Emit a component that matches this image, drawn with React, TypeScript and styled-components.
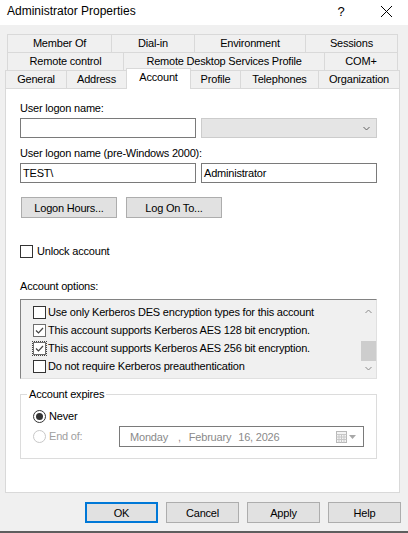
import React from 'react';
import styled, { createGlobalStyle } from 'styled-components';

const GlobalStyle = createGlobalStyle`
  html, body {
    margin: 0;
    padding: 0;
    background: #f0f0f0;
  }
  body {
    font-family: 'Liberation Sans', Arial, sans-serif;
    font-size: 11px;
    color: #000;
  }
  * {
    box-sizing: border-box;
  }
`;

const Window = styled.div`
  width: 408px;
  height: 533px;
  display: flex;
  flex-direction: column;
  background: #f0f0f0;
  border-bottom: 2px solid #5e5e5e;
  overflow: hidden;
  letter-spacing: -0.2px;
`;

const TitleBar = styled.div`
  height: 25px;
  flex-shrink: 0;
  display: flex;
  align-items: center;
  background: #fff;
  padding-left: 7px;
  letter-spacing: 0;
`;

const Title = styled.div`
  flex: 1;
  font-size: 12px;
  line-height: 14px;
  margin-top: -3px;
`;

const TitleButton = styled.div`
  width: 46px;
  height: 25px;
  display: flex;
  align-items: center;
  justify-content: center;
  font-size: 13px;
  margin-top: -3px;

  &:last-child {
    width: 44px;
  }
`;

const TabStrip = styled.div`
  margin-top: 9px;
  display: flex;
  flex-direction: column;
`;

const TabRow = styled.div<{ $left: number }>`
  display: flex;
  height: 18px;
  margin-left: ${(p) => p.$left}px;
`;

const Tab = styled.div<{ $w: number; $active?: boolean }>`
  width: ${(p) => p.$w}px;
  height: ${(p) => (p.$active ? 21 : 18)}px;
  margin-top: ${(p) => (p.$active ? -2 : 0)}px;
  margin-left: -1px;
  flex-shrink: 0;
  border: 1px solid #d9d9d9;
  border-bottom: none;
  background: ${(p) => (p.$active ? '#fff' : '#f0f0f0')};
  text-align: center;
  line-height: 17px;
  white-space: nowrap;
  position: relative;
  z-index: ${(p) => (p.$active ? 2 : 1)};

  &:first-child {
    margin-left: 0;
  }
`;

const Panel = styled.div`
  margin-left: 5px;
  width: 395px;
  height: 405px;
  flex-shrink: 0;
  background: #fff;
  border: 1px solid #d9d9d9;
  padding: 13px 0 0 14px;
  display: flex;
  flex-direction: column;
  align-items: flex-start;
`;

const Label = styled.div<{ $mt?: number }>`
  line-height: 13px;
  margin-top: ${(p) => p.$mt ?? 0}px;
`;

const FieldRow = styled.div`
  display: flex;
  gap: 5px;
  margin-top: 3px;
`;

const TextBox = styled.div`
  width: 176px;
  height: 20px;
  border: 1px solid #7a7a7a;
  background: #fff;
  padding-left: 2px;
  line-height: 18px;
`;

const ComboBox = styled.div`
  width: 176px;
  height: 20px;
  border: 1px solid #cccccc;
  background: #e5e5e5;
  display: flex;
  align-items: center;
  justify-content: flex-end;
  padding-right: 6px;
`;

const ButtonRow = styled.div`
  display: flex;
  gap: 9px;
  margin-top: 14px;
  padding-left: 1px;
`;

const PushButton = styled.button<{ $w: number; $default?: boolean }>`
  width: ${(p) => p.$w}px;
  height: 21px;
  padding: 0;
  background: #e1e1e1;
  border: ${(p) => (p.$default ? '2px solid #0078d7' : '1px solid #adadad')};
  font-family: 'Liberation Sans', Arial, sans-serif;
  font-size: 11px;
  letter-spacing: -0.2px;
  color: #000;
`;

const CheckRow = styled.div<{ $mt?: number; $gap?: number }>`
  display: flex;
  align-items: center;
  gap: ${(p) => p.$gap ?? 4}px;
  margin-top: ${(p) => p.$mt ?? 0}px;
  line-height: 13px;
  white-space: nowrap;
`;

const CheckBox = styled.span<{ $checked?: boolean; $focus?: boolean }>`
  width: 13px;
  height: 13px;
  flex-shrink: 0;
  display: flex;
  align-items: center;
  justify-content: center;
  background: #fff;
  border: 1px solid ${(p) => (p.$checked ? '#6e6e6e' : '#333')};
  outline: ${(p) => (p.$focus ? '1px dotted #444' : 'none')};
  outline-offset: 0px;
`;

const ListBox = styled.div`
  margin-top: 6px;
  width: 357px;
  height: 80px;
  display: flex;
  background: #f0f0f0;
  border: 1px solid #e0e0e0;
  border-top-color: #828282;
  border-left-color: #828282;
`;

const ListItems = styled.div`
  flex: 1;
  padding: 3px 0 0 12px;
`;

const ListItem = styled(CheckRow)`
  height: 18px;
`;

const ScrollBar = styled.div`
  width: 16px;
  display: flex;
  flex-direction: column;
  align-items: center;
  padding-top: 9px;
`;

const Thumb = styled.div`
  width: 15px;
  height: 20px;
  margin-top: 27px;
  background: #cdcdcd;
`;

const ScrollArrow = styled.div<{ $mt?: number }>`
  display: flex;
  margin-top: ${(p) => p.$mt ?? 0}px;
`;

const GroupBox = styled.fieldset`
  margin: 9px 0 0 0;
  width: 357px;
  padding: 0 6px 11px 6px;
  border: 1px solid #dcdcdc;
  min-width: 0;
`;

const Legend = styled.legend`
  padding: 0 2px;
  line-height: 13px;
`;

const ExpireGrid = styled.div`
  display: grid;
  grid-template-columns: 86px 245px;
  grid-template-rows: 16px 21px;
  row-gap: 2px;
  margin-top: 7px;
  padding-left: 6px;
  align-items: center;
`;

const Radio = styled.span<{ $on?: boolean; $disabled?: boolean }>`
  width: 13px;
  height: 13px;
  border-radius: 50%;
  flex-shrink: 0;
  background: #fff;
  border: 1px solid ${(p) => (p.$disabled ? '#c8c8c8' : '#333')};
  display: flex;
  align-items: center;
  justify-content: center;

  &::after {
    content: '';
    width: 7px;
    height: 7px;
    border-radius: 50%;
    background: ${(p) => (p.$on ? '#333' : 'transparent')};
  }
`;

const RadioText = styled.span<{ $disabled?: boolean }>`
  color: ${(p) => (p.$disabled ? '#a0a0a0' : '#000')};
`;

const DatePicker = styled.div`
  height: 21px;
  border: 1px solid #7a7a7a;
  background: #fff;
  display: flex;
  align-items: center;
  padding: 0 7px 0 10px;
  color: #8a8a8a;
  white-space: nowrap;
`;

const DatePart = styled.span<{ $ml?: number }>`
  margin-left: ${(p) => p.$ml ?? 0}px;
`;

const DateIcons = styled.span`
  margin-left: auto;
  display: flex;
  align-items: center;
  gap: 2px;
`;

const Actions = styled.div`
  margin-top: 9px;
  display: flex;
  justify-content: flex-end;
  gap: 8px;
  padding-right: 7px;
`;

const CheckMark = () => (
  <svg width="11" height="11" viewBox="0 0 11 11">
    <path d="M2 5.5 L4.5 8 L9 3" fill="none" stroke="#444" strokeWidth="1.2" />
  </svg>
);

const Check: React.FC<{ checked?: boolean; focus?: boolean }> = ({ checked, focus }) => (
  <CheckBox $checked={checked} $focus={focus}>
    {checked && <CheckMark />}
  </CheckBox>
);

const Chevron: React.FC<{ up?: boolean; color?: string }> = ({ up, color = '#8a8a8a' }) => (
  <svg width="7" height="5" viewBox="0 0 7 5">
    <path
      d={up ? 'M0.5 4 L3.5 1 L6.5 4' : 'M0.5 1 L3.5 4 L6.5 1'}
      fill="none"
      stroke={color}
      strokeWidth="1"
    />
  </svg>
);

const CalendarIcon = () => (
  <svg width="11" height="12" viewBox="0 0 11 12">
    <rect x="0.5" y="0.5" width="10" height="11" fill="#f4f4f4" stroke="#b8b8b8" />
    <path
      d="M0.5 3.5 H10.5 M0.5 6 H10.5 M0.5 8.5 H10.5 M3 3.5 V11.5 M5.5 3.5 V11.5 M8 3.5 V11.5"
      stroke="#c8c8c8"
      strokeWidth="1"
    />
  </svg>
);

const tabRows = [
  {
    left: 7,
    tabs: [
      ['Member Of', 105],
      ['Dial-in', 84],
      ['Environment', 112],
      ['Sessions', 93],
    ],
  },
  {
    left: 7,
    tabs: [
      ['Remote control', 117],
      ['Remote Desktop Services Profile', 202],
      ['COM+', 74],
    ],
  },
  {
    left: 5,
    tabs: [
      ['General', 62],
      ['Address', 61],
      ['Account', 65],
      ['Profile', 51],
      ['Telephones', 79],
      ['Organization', 82],
    ],
  },
] as const;

const options = [
  { text: 'Use only Kerberos DES encryption types for this account', checked: false },
  { text: 'This account supports Kerberos AES 128 bit encryption.', checked: true },
  { text: 'This account supports Kerberos AES 256 bit encryption.', checked: true, focus: true },
  { text: 'Do not require Kerberos preauthentication', checked: false },
];

export default function App() {
  return (
    <>
      <GlobalStyle />
      <Window>
        <TitleBar>
          <Title>Administrator Properties</Title>
          <TitleButton>?</TitleButton>
          <TitleButton>
            <svg width="11" height="11" viewBox="0 0 11 11">
              <path d="M0 0 L11 11 M11 0 L0 11" stroke="#000" strokeWidth="1" />
            </svg>
          </TitleButton>
        </TitleBar>

        <TabStrip>
          {tabRows.map((row, i) => (
            <TabRow key={i} $left={row.left}>
              {row.tabs.map(([name, w]) => (
                <Tab key={name} $w={w} $active={name === 'Account'}>
                  {name}
                </Tab>
              ))}
            </TabRow>
          ))}
        </TabStrip>

        <Panel>
          <Label>User logon name:</Label>
          <FieldRow>
            <TextBox />
            <ComboBox>
              <Chevron color="#606060" />
            </ComboBox>
          </FieldRow>

          <Label $mt={9}>User logon name (pre-Windows 2000):</Label>
          <FieldRow>
            <TextBox>TEST\</TextBox>
            <TextBox>Administrator</TextBox>
          </FieldRow>

          <ButtonRow>
            <PushButton $w={96}>Logon Hours...</PushButton>
            <PushButton $w={96}>Log On To...</PushButton>
          </ButtonRow>

          <CheckRow $mt={27}>
            <Check />
            <span>Unlock account</span>
          </CheckRow>

          <Label $mt={22}>Account options:</Label>
          <ListBox>
            <ListItems>
              {options.map((o) => (
                <ListItem key={o.text} $gap={2}>
                  <Check checked={o.checked} focus={o.focus} />
                  <span>{o.text}</span>
                </ListItem>
              ))}
            </ListItems>
            <ScrollBar>
              <ScrollArrow>
                <Chevron up />
              </ScrollArrow>
              <Thumb />
              <ScrollArrow $mt={5}>
                <Chevron />
              </ScrollArrow>
            </ScrollBar>
          </ListBox>

          <GroupBox>
            <Legend>Account expires</Legend>
            <ExpireGrid>
              <CheckRow $gap={3}>
                <Radio $on />
                <RadioText>Never</RadioText>
              </CheckRow>
              <span />
              <CheckRow $gap={3}>
                <Radio $disabled />
                <RadioText $disabled>End of:</RadioText>
              </CheckRow>
              <DatePicker>
                <DatePart>Monday</DatePart>
                <DatePart $ml={10}>,</DatePart>
                <DatePart $ml={8}>February</DatePart>
                <DatePart $ml={7}>16, 2026</DatePart>
                <DateIcons>
                  <CalendarIcon />
                  <svg width="7" height="4" viewBox="0 0 7 4">
                    <path d="M0 0 H7 L3.5 4 Z" fill="#a8a8a8" />
                  </svg>
                </DateIcons>
              </DatePicker>
            </ExpireGrid>
          </GroupBox>
        </Panel>

        <Actions>
          <PushButton $w={73} $default>
            OK
          </PushButton>
          <PushButton $w={73}>Cancel</PushButton>
          <PushButton $w={73}>Apply</PushButton>
          <PushButton $w={73}>Help</PushButton>
        </Actions>
      </Window>
    </>
  );
}
